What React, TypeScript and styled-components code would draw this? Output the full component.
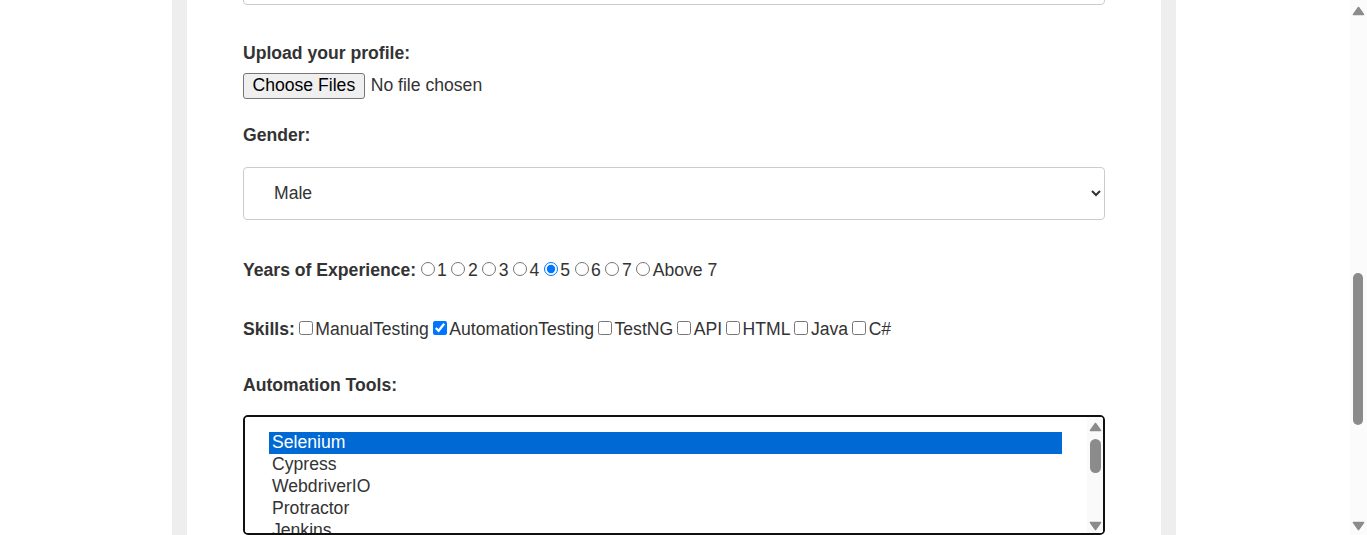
import { useLayoutEffect, useRef, useState } from "react";
import styled, { createGlobalStyle } from "styled-components";

const GlobalStyle = createGlobalStyle`
  html, body {
    margin: 0;
    padding: 0;
    background: #fff;
  }
  body {
    padding-right: 19px;
    font-family: "Liberation Sans", Arial, sans-serif;
    color: #333;
  }
`;

const Page = styled.div`
  width: 974px;
  margin: 0 auto;
  padding: 0 15px;
  background: #eeeeee;
`;

const Card = styled.div`
  background: #fff;
  padding: 83px 56px 45px;
`;

const Title = styled.h2`
  margin: 0 0 40px;
  font-size: 26px;
  line-height: 30px;
  color: #333;
`;

const Form = styled.form`
  display: flex;
  flex-direction: column;
`;

const Field = styled.div<{ $gap?: number; $space?: number }>`
  display: flex;
  flex-direction: column;
  align-items: flex-start;
  gap: ${(p) => p.$gap ?? 20}px;
  margin-bottom: ${(p) => p.$space ?? 39}px;
`;

const Label = styled.label`
  font-size: 17.6px;
  line-height: 20px;
  font-weight: 700;
  color: #333;
`;

const TextInput = styled.input`
  box-sizing: border-box;
  width: 100%;
  height: 53px;
  padding: 0 30px;
  border: 1px solid #ccc;
  border-radius: 4px;
  font-family: inherit;
  font-size: 17.6px;
  color: #333;
`;

const FileInput = styled.input`
  font-family: inherit;
  font-size: 17.6px;
  line-height: 26px;
  color: #333;
  &::file-selector-button {
    height: 26px;
    margin: 0 6px 0 0;
    padding: 0 8.5px;
    border: 1px solid #767676;
    border-radius: 3px;
    background: #efefef;
    font-family: inherit;
    font-size: 17.6px;
    color: #000;
  }
`;

const Select = styled.select`
  box-sizing: border-box;
  width: 100%;
  height: 53px;
  padding: 0 26px;
  border: 1px solid #ccc;
  border-radius: 4px;
  background: #fff;
  font-family: inherit;
  font-size: 17.6px;
  color: #333;
`;

const Line = styled.div<{ $space?: number }>`
  font-size: 17.6px;
  line-height: 20px;
  color: #333;
  margin-bottom: ${(p) => p.$space ?? 39}px;
`;

const Choice = styled.label`
  font-size: 17.6px;
  font-weight: 400;
  color: #333;
`;

const Radio = styled.input.attrs({ type: "radio" })`
  width: 14px;
  height: 14px;
  margin: 0 2.5px 0 4.5px;
`;

const Check = styled.input.attrs({ type: "checkbox" })`
  width: 14px;
  height: 14px;
  margin: 0 2.5px 1px 4px;
`;

const ListWrap = styled.div`
  position: relative;
  width: 100%;
`;

const ListBox = styled.select`
  display: block;
  box-sizing: border-box;
  width: 100%;
  height: 120px;
  padding: 15px 41px 15px 24px;
  border: 2px solid #101010;
  border-radius: 5px;
  outline: none;
  font-family: inherit;
  font-size: 17.6px;
  color: #333;
  option {
    padding: 0 3px 1px;
    line-height: 21.3px;
  }
  option:checked {
    background: #0069d4 linear-gradient(0deg, #0069d4 0%, #0069d4 100%);
    color: #fff;
  }
`;

/* drawn scrollbar of the list box */
const ListScroll = styled.div`
  position: absolute;
  top: 2px;
  right: 2px;
  bottom: 2px;
  width: 16px;
  border-radius: 0 3px 3px 0;
  background: #fafafa;
  display: flex;
  flex-direction: column;
  align-items: center;
  padding: 5px 0 2px;
  box-sizing: border-box;
  pointer-events: none;
`;

const ListThumb = styled.div`
  width: 11px;
  height: 34px;
  margin-top: 7px;
  border-radius: 6px;
  background: #8b8b8b;
`;

const Spacer = styled.div`
  flex: 1;
`;

const TextArea = styled.textarea`
  box-sizing: border-box;
  width: 100%;
  height: 120px;
  padding: 12px 30px;
  border: 1px solid #ccc;
  border-radius: 4px;
  font-family: inherit;
  font-size: 17.6px;
  color: #333;
  resize: vertical;
`;

const SubmitButton = styled.button`
  align-self: flex-start;
  padding: 12px 34px;
  border: none;
  border-radius: 4px;
  background: #0069d4;
  color: #fff;
  font-family: inherit;
  font-size: 17.6px;
  line-height: 20px;
`;

/* drawn window scrollbar */
const PageScroll = styled.div`
  position: fixed;
  top: 0;
  right: 0;
  width: 17px;
  height: 100vh;
  background: #fbfbfb;
  display: flex;
  flex-direction: column;
  align-items: center;
`;

const ArrowBox = styled.div<{ $down?: boolean }>`
  height: 17px;
  display: flex;
  justify-content: center;
  align-items: ${(p) => (p.$down ? "flex-start" : "flex-end")};
  padding: ${(p) => (p.$down ? "3px 0 0" : "0 0 1px")};
  box-sizing: border-box;
`;

const Track = styled.div`
  flex: 1;
  width: 100%;
  position: relative;
`;

const PageThumb = styled.div`
  position: absolute;
  left: 3px;
  width: 10px;
  border-radius: 5px;
  background: #8b8b8b;
`;

function Triangle({ down }: { down?: boolean }) {
  return (
    <svg width="13" height="10" viewBox="0 0 13 10">
      <path
        d={down ? "M1.5 1.5 H11.5 L6.5 8.5 Z" : "M1.5 8.5 H11.5 L6.5 1.5 Z"}
        fill="#8b8b8b"
        stroke="#8b8b8b"
        strokeWidth="1.6"
        strokeLinejoin="round"
      />
    </svg>
  );
}

const topFields = ["Full Name", "Email", "Password", "Phone Number", "Date of Birth"];
const years = ["1", "2", "3", "4", "5", "6", "7", "Above 7"];
const skills = ["ManualTesting", "AutomationTesting", "TestNG", "API", "HTML", "Java", "C#"];
const tools = [
  "Selenium",
  "Cypress",
  "WebdriverIO",
  "Protractor",
  "Jenkins",
  "Appium",
  "Playwright",
  "TestCafe",
  "Katalon Studio",
  "Robot Framework",
  "Postman",
  "JMeter",
];

export default function App() {
  const addressRef = useRef<HTMLInputElement>(null);
  const [thumb, setThumb] = useState({ top: 256, height: 152 });

  // the page is shown scrolled down, with only the bottom edge of the address box in view
  useLayoutEffect(() => {
    const el = addressRef.current;
    if (!el) return;
    const r = el.getBoundingClientRect();
    window.scrollTo(0, r.bottom + window.scrollY - 5);
    const docH = document.documentElement.scrollHeight;
    const vh = window.innerHeight;
    const track = vh - 34;
    setThumb({
      top: (window.scrollY / docH) * track,
      height: (vh / docH) * track,
    });
  }, []);

  return (
    <>
      <GlobalStyle />
      <Page>
        <Card>
          <Title>Registration Form</Title>
          <Form onSubmit={(e) => e.preventDefault()}>
            {topFields.map((f) => (
              <Field key={f}>
                <Label>{f}:</Label>
                <TextInput />
              </Field>
            ))}
            <Field $space={38}>
              <Label>Address:</Label>
              <TextInput ref={addressRef} />
            </Field>

            <Field $gap={9} $space={26}>
              <Label>Upload your profile:</Label>
              <FileInput type="file" multiple />
            </Field>

            <Field $gap={22} $space={40}>
              <Label>Gender:</Label>
              <Select defaultValue="Male">
                <option>Male</option>
                <option>Female</option>
                <option>Other</option>
              </Select>
            </Field>

            <Line $space={39}>
              <Label>Years of Experience:</Label>
              {years.map((y) => (
                <Choice key={y}>
                  <Radio name="exp" defaultChecked={y === "5"} />
                  {y}
                </Choice>
              ))}
            </Line>

            <Line $space={36}>
              <Label>Skills:</Label>
              {skills.map((s) => (
                <Choice key={s}>
                  <Check defaultChecked={s === "AutomationTesting"} />
                  {s}
                </Choice>
              ))}
            </Line>

            <Field>
              <Label>Automation Tools:</Label>
              <ListWrap>
                <ListBox multiple defaultValue={["Selenium"]}>
                  {tools.map((t) => (
                    <option key={t}>{t}</option>
                  ))}
                </ListBox>
                <ListScroll>
                  <Triangle />
                  <ListThumb />
                  <Spacer />
                  <Triangle down />
                </ListScroll>
              </ListWrap>
            </Field>

            <Field>
              <Label>Additional Comments:</Label>
              <TextArea />
            </Field>

            <SubmitButton type="submit">Submit</SubmitButton>
          </Form>
        </Card>
      </Page>
      <PageScroll>
        <ArrowBox>
          <Triangle />
        </ArrowBox>
        <Track>
          <PageThumb style={{ top: thumb.top, height: thumb.height }} />
        </Track>
        <ArrowBox $down>
          <Triangle down />
        </ArrowBox>
      </PageScroll>
    </>
  );
}
